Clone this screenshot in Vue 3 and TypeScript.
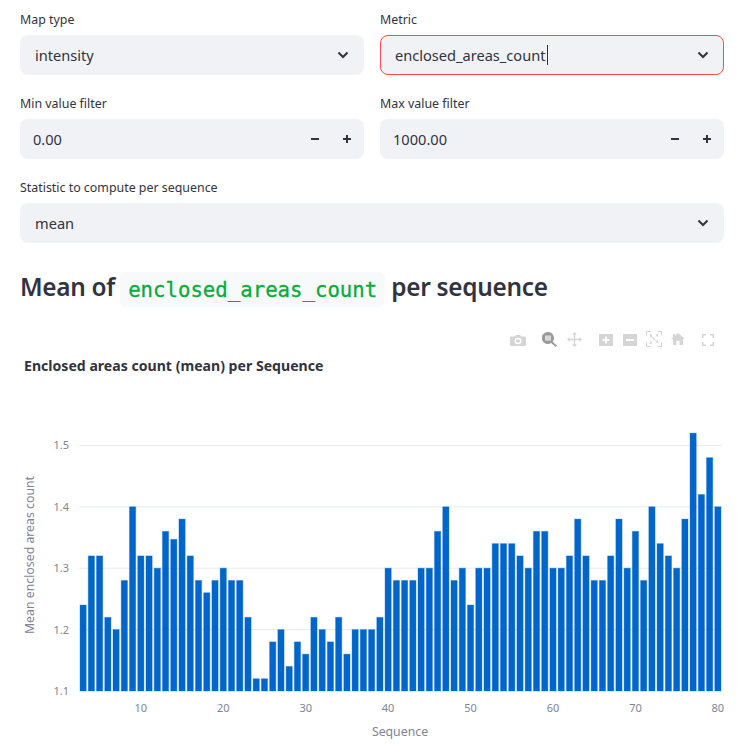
<script setup lang="ts">
const values = [
  1.24, 1.32, 1.32, 1.22, 1.2, 1.28, 1.4, 1.32, 1.32, 1.3, 1.36, 1.347, 1.38, 1.32, 1.28, 1.26, 1.28, 1.3,
  1.28, 1.28, 1.22, 1.12, 1.12, 1.18, 1.2, 1.14, 1.18, 1.16, 1.22, 1.2, 1.18, 1.22, 1.16, 1.2, 1.2, 1.2,
  1.22, 1.3, 1.28, 1.28, 1.28, 1.3, 1.3, 1.36, 1.4, 1.28, 1.3, 1.24, 1.3, 1.3, 1.34, 1.34, 1.34, 1.32,
  1.3, 1.36, 1.36, 1.3, 1.3, 1.32, 1.38, 1.32, 1.28, 1.28, 1.32, 1.38, 1.3, 1.36, 1.28, 1.4, 1.34, 1.32,
  1.3, 1.38, 1.52, 1.42, 1.48, 1.4,
];

const plotLeft = 79;
const plotRight = 722;
const baseY = 361; // y of 1.1 inside the svg
const perUnit = 614;
const step = (plotRight - plotLeft) / 78;

const xOf = (seq: number) => plotLeft + (seq - 2.5) * step;
const yOf = (v: number) => baseY - (v - 1.1) * perUnit;

const bars = values.map((v, i) => ({
  x: xOf(i + 3) - 3.1,
  y: yOf(v),
  h: (v - 1.1) * perUnit,
}));

const yTicks = [1.1, 1.2, 1.3, 1.4, 1.5];
const xTicks = [10, 20, 30, 40, 50, 60, 70, 80];
</script>

<template>
  <div class="page">
    <div class="row">
      <div class="field">
        <label>Map type</label>
        <div class="box select">
          <span>intensity</span>
          <svg class="chev" viewBox="0 0 12 8"><path d="M1.5 1.500 6 6l4.500-4.500" /></svg>
        </div>
      </div>
      <div class="field">
        <label>Metric</label>
        <div class="box select focused">
          <span>enclosed_areas_count</span><i class="caret"></i>
          <svg class="chev" viewBox="0 0 12 8"><path d="M1.5 1.500 6 6l4.500-4.500" /></svg>
        </div>
      </div>
    </div>

    <div class="row">
      <div class="field">
        <label>Min value filter</label>
        <div class="box number">
          <span>0.00</span>
          <div class="steps">
            <svg viewBox="0 0 10 10"><path d="M1 5h8" /></svg>
            <svg viewBox="0 0 10 10"><path d="M1 5h8M5 1v8" /></svg>
          </div>
        </div>
      </div>
      <div class="field">
        <label>Max value filter</label>
        <div class="box number">
          <span>1000.00</span>
          <div class="steps">
            <svg viewBox="0 0 10 10"><path d="M1 5h8" /></svg>
            <svg viewBox="0 0 10 10"><path d="M1 5h8M5 1v8" /></svg>
          </div>
        </div>
      </div>
    </div>

    <div class="field">
      <label>Statistic to compute per sequence</label>
      <div class="box select">
        <span>mean</span>
        <svg class="chev" viewBox="0 0 12 8"><path d="M1.5 1.500 6 6l4.500-4.500" /></svg>
      </div>
    </div>

    <h2>Mean of <code>enclosed_areas_count</code> per sequence</h2>

    <div class="chart">
      <svg class="plot" width="743" height="418" viewBox="0 0 743 418">
        <text class="title" x="24" y="41">Enclosed areas count (mean) per Sequence</text>

        <line v-for="t in yTicks.slice(1)" :key="t" class="grid" :x1="plotLeft" :x2="plotRight" :y1="yOf(t)" :y2="yOf(t)" />
        <text v-for="t in yTicks" :key="'y' + t" class="tick" x="69" :y="yOf(t) + 4" text-anchor="end">{{ t.toFixed(1) }}</text>

        <rect v-for="(b, i) in bars" :key="i" class="bar" :x="b.x" :y="b.y" width="6.2" :height="b.h" />

        <text v-for="t in xTicks" :key="'x' + t" class="tick" :x="xOf(t)" y="382" text-anchor="middle">{{ t }}</text>
        <text class="axis" x="400" y="406" text-anchor="middle">Sequence</text>
        <text class="axis" transform="translate(34 225) rotate(-90)" text-anchor="middle">Mean enclosed areas count</text>
      </svg>

      <div class="modebar">
        <svg class="mb cam" width="16" height="11" viewBox="0 0 16 12" preserveAspectRatio="none"><path fill-rule="evenodd" d="M1.500 1.500h3L6 0h4l1.500 1.500h3A1.500 1.500 0 0 1 16 3v7.500a1.500 1.500 0 0 1-1.500 1.500h-13A1.500 1.500 0 0 1 0 10.500V3a1.500 1.500 0 0 1 1.500-1.500ZM8 3a3.500 3.500 0 1 0 0 7 3.500 3.500 0 0 0 0-7Zm0 1.500a2 2 0 1 1 0 4 2 2 0 0 1 0-4Z" /></svg>
        <svg class="mb lens" width="15" height="15" viewBox="0 0 15 15"><rect x="3" y="3" width="6" height="5.500" fill="#d8d8d8" /><path fill-rule="evenodd" d="M6 0a6 6 0 0 1 4.700 9.700l4.300 4-1.400 1.300-4.400-4.100A6 6 0 1 1 6 0ZM3 3.500v5h6v-5H3Z" /></svg>
        <svg class="mb pan" width="15" height="15" viewBox="0 0 15 15"><path d="M7.500 0 10 2.800H8.200v4h4V5L15 7.500 12.200 10V8.200h-4v4H10L7.500 15 5 12.200h1.800v-4h-4V10L0 7.500 2.800 5v1.800h4v-4H5Z" /></svg>
        <svg class="mb plus" width="14" height="12" viewBox="0 0 14 12"><path fill-rule="evenodd" d="M0 0h14v12H0ZM6 2.500V5H3.500v2H6v2.500h2V7h2.500V5H8V2.500Z" /></svg>
        <svg class="mb minus" width="14" height="12" viewBox="0 0 14 12"><path fill-rule="evenodd" d="M0 0h14v12H0Zm3 5v2h8V5Z" /></svg>
        <svg class="mb auto" width="16" height="16" viewBox="0 0 16 16"><path d="M0 0h4.500v1H1v3.500H0Zm11.500 0H16v4.500h-1V1h-3.500ZM0 11.500h1V15h3.500v1H0ZM15 11.500h1V16h-4.500v-1H15Z" /><path d="m3.500 2.500 3 1.500-1 .8L8 7.200l2.500-2.400-1-.8 3-1.500-1 3.500-.9-1-2.400 2.500 2.400 2.500.9-1 1 3.500-3-1.500 1-.8L8 8.800l-2.500 2.400 1 .8-3 1.500 1-3.500.9 1 2.400-2.500-2.400-2.500-.9 1Z" /></svg>
        <svg class="mb home" width="14" height="12" viewBox="0 0 14 13" preserveAspectRatio="none"><path d="M7 0 14 6.500h-2V13H8.500V8.500h-3V13H2V6.500H0L2 4.600V1h2v1.800Z" /></svg>
        <svg class="mb full" width="12" height="12" viewBox="0 0 12 12"><path d="M0 0h4v1.500H1.500V4H0Zm8 0h4v4h-1.500V1.500H8ZM0 8h1.500v2.500H4V12H0Zm10.500 0H12v4H8v-1.500h2.500Z" /></svg>
      </div>
    </div>
  </div>
</template>

<style>
html,
body {
  margin: 0;
  background: #fff;
}
</style>

<style scoped>
.page {
  width: 704px;
  padding: 11px 19px 0 20px;
  font-family: "Noto Sans", sans-serif;
  color: #31333f;
  display: flex;
  flex-direction: column;
  gap: 20px;
}

.row {
  display: grid;
  grid-template-columns: 344px 344px;
  gap: 16px;
}

.field label {
  display: block;
  height: 15px;
  padding-top: 1px;
  margin-bottom: 8px;
  font-size: 12.4px;
  line-height: 16px;
}

.box {
  height: 40px;
  box-sizing: border-box;
  background: #f0f2f6;
  border-radius: 8px;
  display: flex;
  align-items: center;
  font-size: 14.6px;
}

.select {
  padding: 0 15px;
}

.focused {
  border: 1px solid #ff4b4b;
  padding: 0 14px;
}

.caret {
  width: 1px;
  height: 20px;
  margin-left: 2px;
  background: #31333f;
}

.chev {
  width: 12px;
  height: 8px;
  margin-left: auto;
  fill: none;
  stroke: #31333f;
  stroke-width: 2;
}

.number {
  padding-left: 13px;
}

.steps {
  margin-left: auto;
  margin-right: 12px;
  display: flex;
  gap: 22px;
}

.steps svg {
  width: 10px;
  height: 10px;
  fill: none;
  stroke: #31333f;
  stroke-width: 2;
}

h2 {
  margin: 7px 0 0;
  height: 39px;
  display: flex;
  align-items: flex-start;
  font-size: 24.4px;
  line-height: 33px;
  letter-spacing: -0.3px;
  font-weight: 600;
  white-space: pre;
}

code {
  height: 35px;
  margin: 2px 0 0 -1px;
  line-height: 36px;
  padding: 0 8px;
  background: #f8f9fb;
  border-radius: 6px;
  color: #09ab3b;
  font-family: "DejaVu Sans Mono", "Liberation Mono", monospace;
  font-size: 20.7px;
  font-weight: 400;
  letter-spacing: 0;
  -webkit-text-stroke: 0.3px #09ab3b;
}

.chart {
  position: relative;
  height: 418px;
  margin: 1px 0 0 -20px;
  width: 743px;
}

.plot {
  display: block;
  font-family: "Noto Sans", sans-serif;
}

.title {
  font-size: 14.1px;
  font-weight: 700;
  fill: #31333f;
}

.grid {
  stroke: #e6eaf1;
  stroke-width: 1;
}

.bar {
  fill: #0066cc;
  stroke: #0066cc;
  stroke-opacity: 0.35;
  stroke-width: 1;
}

.tick {
  font-size: 11px;
  fill: #808495;
}

.axis {
  font-size: 12.3px;
  fill: #808495;
}

.modebar {
  position: absolute;
  inset: 0;
  pointer-events: none;
}

.mb {
  position: absolute;
  fill: #d5d5d5;
}

.cam { left: 510px; top: 5px; }
.lens { left: 542px; top: 2px; fill: #9a9a9a; }
.pan { left: 567px; top: 2px; }
.plus { left: 599px; top: 4px; }
.minus { left: 623px; top: 4px; }
.auto { left: 646px; top: 1px; }
.home { left: 671px; top: 3px; }
.full { left: 702px; top: 4px; }
</style>
